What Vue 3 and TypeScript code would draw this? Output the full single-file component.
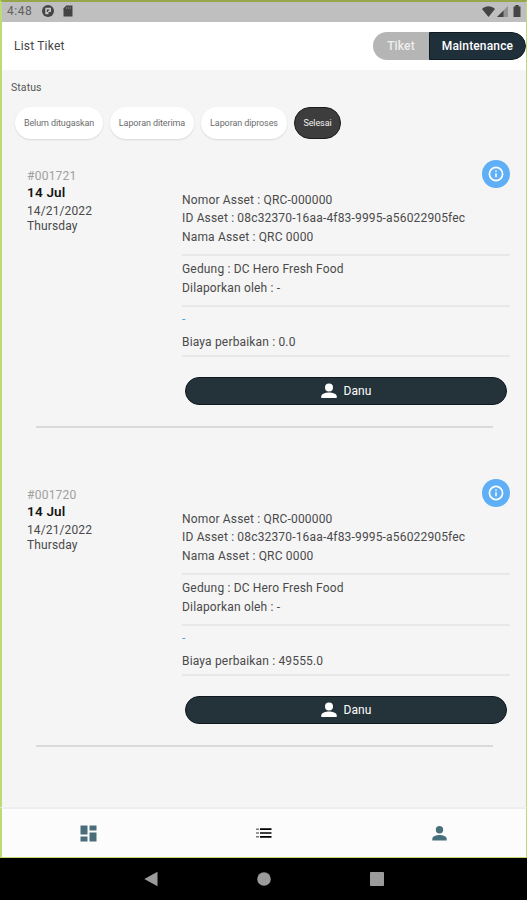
<script setup lang="ts">
interface Ticket {
  id: string
  day: string
  date: string
  weekday: string
  asset: string[]
  place: string[]
  note: string
  cost: string
  assignee: string
}

const filters = [
  { label: 'Belum ditugaskan', cls: 'f1' },
  { label: 'Laporan diterima', cls: 'f2' },
  { label: 'Laporan diproses', cls: 'f3' },
  { label: 'Selesai', cls: 'f4 active' },
]

const makeTicket = (id: string, cost: string): Ticket => ({
  id,
  day: '14 Jul',
  date: '14/21/2022',
  weekday: 'Thursday',
  asset: [
    'Nomor Asset : QRC-000000',
    'ID Asset : 08c32370-16aa-4f83-9995-a56022905fec',
    'Nama Asset : QRC 0000',
  ],
  place: ['Gedung : DC Hero Fresh Food', 'Dilaporkan oleh : -'],
  note: '-',
  cost: `Biaya perbaikan : ${cost}`,
  assignee: 'Danu',
})

const tickets: Ticket[] = [makeTicket('#001721', '0.0'), makeTicket('#001720', '49555.0')]
</script>

<template>
  <div class="phone">
    <div class="screen">
      <div class="statusbar">
        <span class="clock">4:48</span>
        <svg class="app-ico" viewBox="0 0 12 12"><circle cx="6" cy="6" r="6" fill="#444" /><path d="M3.300 2.800H9V7H6.500V9.300H3.300z" fill="#c4c4c4" /><path d="M4.800 4.500H7.300V5.700H6V7H4.800z" fill="#444" /></svg>
        <svg class="sd-ico" viewBox="0 0 10 12"><path d="M3.200 0.500H9.500V11.500H0.500V3.200z" fill="#444" /><path d="M3.500 2v2M5.300 2v2M7.100 2v2" stroke="#858585" stroke-width=".8" /></svg>
        <span class="grow"></span>
        <svg class="wifi-ico" viewBox="0 0 13 11"><path d="M0 3C3.800-.6 9.200-.6 13 3L6.500 11z" fill="#444" /></svg>
        <svg class="signal-ico" viewBox="0 0 11 11"><path d="M11 0V11H0z" fill="#929292" /><path d="M6.500 4.500V11H0z" fill="#444" /></svg>
        <svg class="battery-ico" viewBox="0 0 8 12"><path d="M2.300 0h3.400v1.400H7.500V12H.5V1.400h1.800z" fill="#444" /></svg>
      </div>

      <header class="header">
        <h1>List Tiket</h1>
        <div class="toggle">
          <button class="left">Tiket</button>
          <button class="right">Maintenance</button>
        </div>
      </header>

      <main class="content">
        <div class="status-label">Status</div>
        <div class="filters">
          <button v-for="f in filters" :key="f.label" class="chip" :class="f.cls">{{ f.label }}</button>
        </div>

        <article v-for="t in tickets" :key="t.id" class="ticket">
          <div class="row">
            <div class="when">
              <div class="num">{{ t.id }}</div>
              <div class="day">{{ t.day }}</div>
              <div class="date">{{ t.date }}</div>
              <div class="weekday">{{ t.weekday }}</div>
            </div>
            <div class="detail">
              <button class="info" aria-label="Info">
                <svg viewBox="0 0 16 16"><circle cx="8" cy="8" r="6.600" fill="none" stroke="#fff" stroke-width="1.700" /><path d="M8 7.200v4M8 4.500v1.500" stroke="#d4ebff" stroke-width="2" /></svg>
              </button>
              <div class="group asset"><p v-for="a in t.asset" :key="a">{{ a }}</p></div>
              <div class="group place"><p v-for="p in t.place" :key="p">{{ p }}</p></div>
              <div class="group costs"><p class="note">{{ t.note }}</p><p class="cost">{{ t.cost }}</p></div>
              <button class="assignee">
                <svg viewBox="0 0 16 16"><circle cx="8" cy="4.500" r="4" fill="#fff" /><path d="M.3 15v-1.800C.3 10.600 4.800 9.400 8 9.400s7.700 1.200 7.700 3.800V15z" fill="#fff" /></svg>
                <span>{{ t.assignee }}</span>
              </button>
            </div>
          </div>
          <hr />
        </article>
      </main>

      <nav class="tabs">
        <a><svg width="17" height="17" viewBox="0 0 17 17" fill="#4b6c7b"><path d="M.5.5h7v9h-7zM9.500.5h7v5h-7zM.5 11.500h7v5h-7zM9.500 7.500h7v9h-7z" /></svg></a>
        <a><svg width="17" height="10" viewBox="0 0 17 10"><path d="M1 1.200h3M1 5h3M1 8.800h3" stroke="#777" stroke-width="1.400" /><path d="M5 1.200h11.500M5 5h11.500M5 8.800h11.500" stroke="#000" stroke-width="1.700" /></svg></a>
        <a><svg width="15" height="15" viewBox="0 0 15 15" fill="#46707b"><circle cx="7.500" cy="3.700" r="3.700" /><path d="M.3 14.500v-1.700C.3 10.200 4.500 9 7.500 9s7.200 1.200 7.200 3.800v1.700z" /></svg></a>
      </nav>
    </div>
    <div class="sysnav">
      <svg width="14" height="16" viewBox="0 0 14 16"><path d="M13.500.7v14.600L.3 8z" fill="#9b9b9b" /></svg>
      <svg width="14" height="14" viewBox="0 0 14 14"><circle cx="7" cy="7" r="6.800" fill="#9b9b9b" /></svg>
      <svg width="14" height="14" viewBox="0 0 14 14"><rect width="14" height="14" rx=".7" fill="#9b9b9b" /></svg>
    </div>
  </div>
</template>

<style>
body { margin: 0; background: #000; }
</style>

<style scoped>
* { box-sizing: border-box; }
button { border: 0; padding: 0; margin: 0; font-family: inherit; }
svg { display: block; flex: none; }
.phone { width: 527px; height: 900px; display: flex; flex-direction: column; overflow: hidden; background: #000; font-family: Roboto, sans-serif; color: #4a4a4a; }
.screen { height: 858px; flex: none; display: flex; flex-direction: column; border: solid #bddb75; border-width: 2px 1px 1px 2px; border-top-color: #96a64b; border-bottom-color: #c4d96d; background: #f5f5f5; }
.statusbar { height: 20px; flex: none; display: flex; align-items: center; padding: 0 4px 2px 5px; background: #bfbfbf; }
.clock { width: 35px; font-size: 12px; line-height: 18px; color: #606060; letter-spacing: .5px; }
.app-ico { width: 12px; height: 12px; }
.sd-ico { width: 10px; height: 12px; margin-left: 9px; }
.grow { flex: 1; }
.wifi-ico { width: 13px; height: 11px; }
.signal-ico { width: 11px; height: 11px; margin: 1px 5px 0 2px; }
.battery-ico { width: 8px; height: 12px; margin-right: 1px; }
.header { height: 48px; flex: none; display: flex; justify-content: space-between; align-items: center; padding-left: 12px; background: #fff; }
h1 { margin: 0; font-size: 12px; font-weight: 400; color: #444; letter-spacing: .2px; }
.toggle { display: flex; height: 28px; width: 153px; border-radius: 14px; overflow: hidden; }
.toggle button { font-size: 12px; color: #fff; font-weight: 500; letter-spacing: .15px; }
.left { width: 56px; background: #b5b5b5; }
.toggle .left { color: #eee; }
.right { flex: 1; background: #20303a; border: 1px solid #111a20; border-radius: 0 14px 14px 0; }
.content { flex: 1; min-height: 0; overflow: hidden; }
.status-label { padding: 11px 0 0 9px; font-size: 10.500px; line-height: 14px; height: 37px; color: #555; letter-spacing: .1px; }
.filters { display: flex; gap: 7px; padding-left: 13px; height: 51px; align-items: flex-start; }
.chip { height: 32px; border-radius: 16px; background: #fff; box-shadow: 0 1px 2px #0000001f; font-size: 9px; letter-spacing: -.1px; color: #6c6c6c; white-space: nowrap; display: flex; justify-content: center; align-items: center; }
.f1 { width: 88px; }
.f2 { width: 84px; }
.f3 { width: 86px; }
.f4 { width: 47px; }
.chip.active { background: #3d3d3d; border: 1px solid #1c1c1c; color: #f0f0f0; box-shadow: none; }
.ticket { height: 319px; }
.row { display: flex; padding: 2px 16px 0 25px; height: 268px; }
.when { width: 155px; padding-top: 9px; font-size: 12px; line-height: 15px; letter-spacing: .12px; }
.num { color: #a0a0a0; letter-spacing: .25px; }
.day { font-size: 13.500px; font-weight: 600; color: #151515; height: 20px; line-height: 16px; letter-spacing: .2px; }
.weekday { line-height: 14px; }
.detail { flex: 1; display: flex; flex-direction: column; }
.info { width: 28px; height: 28px; border-radius: 50%; background: #5eaff5; align-self: flex-end; display: flex; justify-content: center; align-items: center; }
.info svg { width: 16px; height: 16px; }
p { margin: 0; font-size: 12px; line-height: 18.500px; letter-spacing: .17px; white-space: nowrap; }
.group { border-bottom: 2px solid #e8e8e8; }
.asset { height: 68px; padding-top: 2.800px; }
.place { height: 51px; padding-top: 4px; }
.costs { height: 50px; padding-top: 3px; }
.note { height: 23px; color: #45a5e6; }
.assignee { height: 28px; margin: 20px 3px 0; border-radius: 14px; background: #24323a; border: 1px solid #10191f; color: #fff; display: flex; align-items: center; justify-content: center; gap: 6px; font-size: 12px; letter-spacing: .1px; padding-left: 1px; }
.assignee svg { width: 16px; height: 16px; }
hr { height: 2px; margin: 0 33px 0 34px; border: 0; background: #dadada; }
.tabs { height: 50px; flex: none; display: flex; background: #fcfcfc; border-top: 2px solid #eee; margin: 0 -1px 0 -2px; padding: 0; border-left: 2px solid #bddb75; border-right: 1px solid #bddb75; }
.tabs a { flex: 1; display: flex; align-items: center; justify-content: center; }
.tabs a:first-child { padding-right: 2px; }
.tabs a:last-child { padding-left: 2px; }
.sysnav { flex: 1; display: flex; align-items: center; justify-content: center; gap: 99px; }
</style>
